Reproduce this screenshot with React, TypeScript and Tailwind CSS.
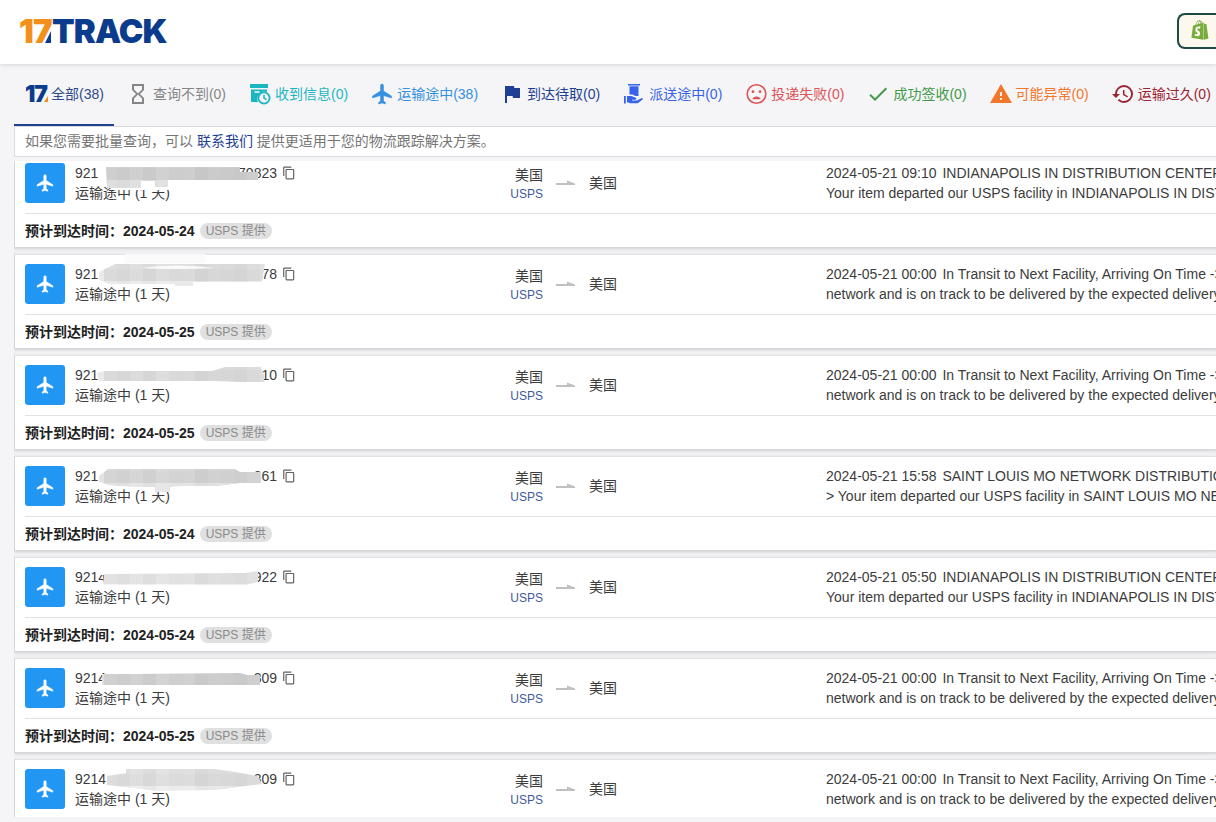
import React from "react";
import {
  MdCheck,
  MdContentCopy,
  MdFlag,
  MdHistory,
  MdHourglassEmpty,
  MdWarning,
} from "react-icons/md";
import { FaShopify } from "react-icons/fa";

function Mark17() {
  return (
    <span className="relative block w-6 text-[23px] leading-6 font-black tracking-tighter text-[#0b3b8c] font-['Inter','Liberation_Sans',sans-serif]">
      17
      <svg viewBox="0 0 4 6" className="absolute right-0 bottom-1 h-1.5 w-1" aria-hidden="true">
        <path d="M4 0V6H0Z" fill="#f39019" />
      </svg>
    </span>
  );
}

function Plane({ className }: { className: string }) {
  return (
    <svg
      viewBox="0 0 24 24"
      className={className}
      fill="currentColor"
      stroke="currentColor"
      strokeWidth="0.500"
      aria-hidden="true"
    >
      <path d="M21.500 16v-2l-8-5V3.500c0-.83-.67-1.500-1.500-1.500s-1.500.67-1.500 1.500V9l-8 5v2l8-2.500V19l-2 1.500V22l3.500-1 3.500 1v-1.500l-2-1.500v-5.500l8 2.500z" />
    </svg>
  );
}

function ParcelClock() {
  return (
    <svg viewBox="0 0 24 24" className="size-6" aria-hidden="true">
      <path d="M2 2h18v4H2z" fill="currentColor" />
      <path d="M3 7.500h16v2.600A7 7 0 0 0 10.300 20H3z" fill="currentColor" />
      <path d="M6.500 10h5" stroke="#f5f5f8" strokeWidth="1.600" />
      <circle cx="16" cy="16" r="5.600" fill="#f5f5f8" stroke="currentColor" strokeWidth="1.800" />
      <path d="M16 12.800V16.200l2.500 1.500" fill="none" stroke="currentColor" strokeWidth="1.500" />
    </svg>
  );
}

function HandParcel() {
  return (
    <svg viewBox="0 0 24 24" className="size-6" fill="currentColor" aria-hidden="true">
      <path d="M6 2h12v1.500H6zM7.500 4.300h9v9.700h-3l-3-1.500h-3z" />
      <path d="M2 14h1.800v7.500H2zM5 14h4.300l4.400 1.700c.9.400 1 1.700-.1 2H10v.8h5l4.400-2.300c1-.5 1.900.6 1.200 1.400L15.800 21.300H8.500L5 20.300z" />
    </svg>
  );
}

function SadFace() {
  return (
    <svg viewBox="0 0 24 24" className="size-6" aria-hidden="true">
      <circle cx="12.500" cy="12" r="9.300" fill="none" stroke="currentColor" strokeWidth="1.600" />
      <circle cx="9" cy="9.700" r="1.400" fill="currentColor" />
      <circle cx="16" cy="9.700" r="1.400" fill="currentColor" />
      <path d="M8.300 17.300a4.500 4.500 0 0 1 8.400 0z" fill="currentColor" />
    </svg>
  );
}

const tabs: { label: string; color: string; icon: React.ReactNode }[] = [
  { label: "全部(38)", color: "text-[#2d4a8c]", icon: <Mark17 /> },
  { label: "查询不到(0)", color: "text-[#858585]", icon: <MdHourglassEmpty size={24} /> },
  { label: "收到信息(0)", color: "text-[#1cb5c2]", icon: <ParcelClock /> },
  { label: "运输途中(38)", color: "text-[#3590e0]", icon: <Plane className="size-6" /> },
  { label: "到达待取(0)", color: "text-[#1f3f93]", icon: <MdFlag size={24} /> },
  { label: "派送途中(0)", color: "text-[#3763ea]", icon: <HandParcel /> },
  { label: "投递失败(0)", color: "text-[#dd5252]", icon: <SadFace /> },
  { label: "成功签收(0)", color: "text-[#439a48]", icon: <MdCheck size={24} /> },
  { label: "可能异常(0)", color: "text-[#f3772b]", icon: <MdWarning size={24} /> },
  { label: "运输过久(0)", color: "text-[#9c2430]", icon: <MdHistory size={24} /> },
];

type Parcel = {
  prefix: string;
  suffix: string;
  blob: string;
  halo: string;
  shade: number;
  eta: string;
  time: string;
  event: string;
  detail: string;
};

const transit = {
  time: "2024-05-21 00:00",
  event: "In Transit to Next Facility, Arriving On Time ->",
  detail: "network and is on track to be delivered by the expected delivery date",
};
const indianapolis = {
  event: "INDIANAPOLIS IN DISTRIBUTION CENTER ->",
  detail: "Your item departed our USPS facility in INDIANAPOLIS IN DISTRIBUTION CENTER",
};

const parcels: Parcel[] = [
  {
    prefix: "921",
    suffix: "70823",
    blob: "M31 14H165V19H183V27H93V34H80V28H66V35H32Z",
    halo: "M24 12H162V28H110V37H36V28H24Z",
    shade: 0,
    eta: "2024-05-24",
    time: "2024-05-21 09:10",
    ...indianapolis,
  },
  {
    prefix: "921",
    suffix: "78",
    blob: "M24 18L40 10H190L187 28H118V32H100V30H35L24 26Z",
    halo: "M50 0H130V9H50ZM66 14Q100 9 140 14Q100 16 66 14Z",
    shade: 12,
    eta: "2024-05-25",
    ...transit,
  },
  {
    prefix: "921",
    suffix: "10",
    blob: "M22 18L29 16H137L150 12H186L189 20V27H165L140 26H40L24 26Z",
    halo: "",
    shade: 12,
    eta: "2024-05-25",
    ...transit,
  },
  {
    prefix: "921",
    suffix: "361",
    blob: "M24 20L33 13H160L165 16H186V27H165L140 30H108L95 31V36H80V31H60L34 29L24 26Z",
    halo: "M40 28H130V31H92V36H76V33H40Z",
    shade: 6,
    eta: "2024-05-24",
    time: "2024-05-21 15:58",
    event: "SAINT LOUIS MO NETWORK DISTRIBUTION CENTER -",
    detail: "> Your item departed our USPS facility in SAINT LOUIS MO NETWORK",
  },
  {
    prefix: "9214",
    suffix: "922",
    blob: "M29 17L170 16L183 14V25L170 28H28Z",
    halo: "M26 12H40V18H26Z",
    shade: 20,
    eta: "2024-05-24",
    time: "2024-05-21 05:50",
    ...indianapolis,
  },
  {
    prefix: "9214",
    suffix: "309",
    blob: "M27 16H55L165 15L172 17H185V27H27Z",
    halo: "",
    shade: 2,
    eta: "2024-05-25",
    ...transit,
  },
  {
    prefix: "9214",
    suffix: "309",
    blob: "M32 17L51 14V10H140L160 13L183 17L187 25L170 27L140 31L80 32L60 29L32 26Z",
    halo: "",
    shade: 14,
    eta: "2024-05-25",
    ...transit,
  },
];

const tileTones = [222, 206, 203, 208, 202, 209, 205, 206, 199, 203, 202, 200, 205, 210];

function Redaction({ index, parcel }: { index: number; parcel: Parcel }) {
  const clip = `redaction-${index}`;
  return (
    <svg
      viewBox="0 0 202 50"
      className="pointer-events-none absolute -top-2.5 left-0 h-[50px] w-[202px]"
      aria-hidden="true"
    >
      <clipPath id={clip}>
        <path d={parcel.blob} />
      </clipPath>
      {index !== 1 && <path d={parcel.halo} fill="#fff" />}
      <g clipPath={`url(#${clip})`} shapeRendering="crispEdges">
        {[0, 1, 2].map((row) =>
          tileTones.map((tone, col) => {
            const v = tone + parcel.shade + (row === 2 ? 16 : row === 0 ? 4 : 0);
            return (
              <rect
                key={`${row}-${col}`}
                x={16 + col * 13}
                y={row === 0 ? 0 : row === 1 ? 15 : 27}
                width={13}
                height={row === 2 ? 20 : 15}
                fill={`rgb(${v},${v},${v})`}
              />
            );
          }),
        )}
      </g>
      {index === 1 && <path d={parcel.halo} fill="#fafafa" />}
    </svg>
  );
}

function ParcelCard({ parcel, index }: { parcel: Parcel; index: number }) {
  const first = index === 0;
  return (
    <article
      className={`shrink-0 border-b border-l border-[#d6d6da] bg-white pl-2.5 shadow-[0_1px_2px_rgba(0,0,0,0.12)] ${
        first ? "pt-0.5" : "border-t border-t-[#e2e2e5] pt-[9px]"
      }`}
    >
      <div className="grid grid-cols-[485px_316px_500px] pb-2.5">
        <div className="flex gap-2.5">
          <div className="flex size-10 items-center justify-center rounded-[3px] bg-[#2196f3] text-white">
            <Plane className="size-5" />
          </div>
          <div className="relative">
            <div className="flex h-5 items-center gap-[5px]">
              <div className="flex w-[202px] justify-between">
                <span>{parcel.prefix}</span>
                <span>{parcel.suffix}</span>
              </div>
              <button type="button" aria-label="复制" className="text-[#616161]">
                <MdContentCopy size={14} />
              </button>
            </div>
            <p>运输途中 (1 天)</p>
            <Redaction index={index} parcel={parcel} />
          </div>
        </div>
        <div className="flex items-center">
          <div className="w-[33px] pt-0.5 text-right">
            <p className="leading-5">美国</p>
            <a href="#usps" className="block text-xs leading-[18px] text-[#3f5a9e]">
              USPS
            </a>
          </div>
          <svg viewBox="0 0 20 6" className="mx-[13px] h-1.5 w-5" aria-hidden="true">
            <path d="M0 3H11V0.500L19 3.500V5H0Z" fill="#c0c0c0" />
          </svg>
          <p>美国</p>
        </div>
        <div className="whitespace-nowrap">
          <p>
            <time className="mr-0.5">{parcel.time}</time> {parcel.event}
          </p>
          <p>{parcel.detail}</p>
        </div>
      </div>
      <div className="flex h-[34px] items-center border-t border-[#e2e2e2] font-bold text-[#222]">
        <span>预计到达时间：{parcel.eta}</span>
        <span className="ml-[5px] rounded-full bg-[#e0e0e0] px-1.5 text-xs leading-4 font-normal text-[#8a8a8a]">
          USPS 提供
        </span>
      </div>
    </article>
  );
}

export default function App() {
  return (
    <div className="flex h-screen flex-col overflow-hidden bg-[#f5f5f8] pb-[5px] text-sm leading-5 text-[#3c3c3c] font-['Liberation_Sans','Noto_Sans_CJK_SC',sans-serif]">
      <header className="relative flex h-16 shrink-0 items-center justify-between bg-white pb-0.5 pl-[19px] shadow-[0_1px_4px_rgba(0,0,0,0.12)]">
        <a
          href="#home"
          className="relative flex text-[33px] leading-10 font-black tracking-tight text-[#0b3b8c] font-['Inter','Liberation_Sans',sans-serif]"
        >
          <span className="text-[#f39019]">17</span>
          <span>TRACK</span>
          <svg
            viewBox="0 0 6 12"
            className="absolute bottom-2 left-[26px] h-3 w-1.5"
            aria-hidden="true"
          >
            <path d="M6 0V12H0Z" fill="#0b3b8c" />
          </svg>
        </a>
        <button
          type="button"
          aria-label="Shopify"
          className="flex h-9 w-[39px] items-center rounded-l-lg border-2 border-r-0 border-[#1d4a44] bg-[#fdf8ee] pb-0.5 pl-[11px] text-[#76ac3c]"
        >
          <FaShopify size={20} />
        </button>
      </header>

      <nav className="flex h-[62px] shrink-0 gap-0.5 pl-3.5">
        {tabs.map((tab, i) => (
          <button
            key={tab.label}
            type="button"
            className={`flex shrink-0 items-center gap-[3px] border-b-2 px-2.5 whitespace-nowrap ${tab.color} ${
              i === 0 ? "border-[#1f3f93]" : "border-transparent"
            }`}
          >
            {tab.icon}
            <span>{tab.label}</span>
          </button>
        ))}
      </nav>

      <main className="flex min-h-0 flex-1 flex-col pl-3.5">
        <p className="mb-1 flex h-[31px] shrink-0 items-center border border-r-0 border-[#dcdce0] bg-white pb-px pl-2.5 text-[#757575]">
          <span>
            如果您需要批量查询，可以{" "}
            <a href="#contact" className="text-[#1f3f93]">
              联系我们
            </a>{" "}
            提供更适用于您的物流跟踪解决方案。
          </span>
        </p>
        <div className="flex min-h-0 flex-1 flex-col gap-1.5 overflow-hidden bg-[#f0f0f2]">
          {parcels.map((parcel, i) => (
            <ParcelCard key={i} parcel={parcel} index={i} />
          ))}
        </div>
      </main>
    </div>
  );
}
